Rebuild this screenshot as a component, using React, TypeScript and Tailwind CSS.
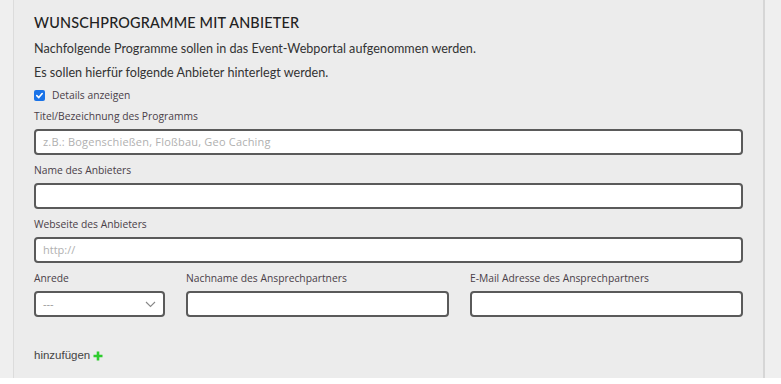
import React from "react";

const labelCls = "text-[10.3px] leading-[14px] text-[#4a4048] font-['Open_Sans',sans-serif]";
const inputCls = "h-[26px] rounded-[4px] border-2 border-[#5a5a5a] bg-white";

export default function App() {
  return (
    <div className="w-[781px] h-[384px] overflow-hidden bg-[#efefef] flex flex-col">
      <div className="flex h-[378px]">
        <div className="w-[13px] bg-[#efefef]" />
        <div className="w-[1px] bg-[#dcdcdc]" />
        <div className="w-[749px] bg-[#ececec] pl-[20px] pr-[20px] flex flex-col">
          <div className="mt-[14px] text-[14.4px] leading-[18px] tracking-[0.2px] text-[#222] font-['Lato',sans-serif] font-medium">
            WUNSCHPROGRAMME MIT ANBIETER
          </div>
          <div className="mt-[9px] text-[12.6px] leading-[16px] text-[#333] font-['Lato',sans-serif]">
            Nachfolgende Programme sollen in das Event-Webportal aufgenommen werden.
          </div>
          <div className="mt-[8px] text-[12.6px] leading-[16px] text-[#333] font-['Lato',sans-serif]">
            Es sollen hierfür folgende Anbieter hinterlegt werden.
          </div>
          <div className="mt-[7px] flex items-center h-[14px]">
            <div className="w-[11px] h-[11px] rounded-[2px] bg-[#1a73e8] flex items-center justify-center">
              <svg width="9" height="9" viewBox="0 0 10 10">
                <path d="M2 5.2 L4.2 7.3 L8 2.8" stroke="white" strokeWidth="1.8" fill="none" strokeLinecap="round" strokeLinejoin="round" />
              </svg>
            </div>
            <span className={labelCls + " ml-[7px]"}>Details anzeigen</span>
          </div>
          <div className={labelCls + " mt-[7px]"}>Titel/Bezeichnung des Programms</div>
          <div className={inputCls + " mt-[6px] w-[709px] flex items-center px-[7px]"}>
            <span className="text-[11px] text-[#b0b0b0] font-['Open_Sans',sans-serif] tracking-[0.2px]">
              z.B.: Bogenschießen, Floßbau, Geo Caching
            </span>
          </div>
          <div className={labelCls + " mt-[8px]"}>Name des Anbieters</div>
          <div className={inputCls + " mt-[6px] w-[709px]"} />
          <div className={labelCls + " mt-[8px]"}>Webseite des Anbieters</div>
          <div className={inputCls + " mt-[6px] w-[709px] flex items-center px-[7px]"}>
            <span className="text-[11px] text-[#b0b0b0] font-['Open_Sans',sans-serif]">http://</span>
          </div>
          <div className="mt-[8px] flex gap-[21px]">
            <div className="flex flex-col w-[131px]">
              <div className={labelCls}>Anrede</div>
              <div className={inputCls + " mt-[6px] flex items-center justify-between px-[7px]"}>
                <span className="text-[11px] text-[#999] font-['Open_Sans',sans-serif]">---</span>
                <svg width="11" height="7" viewBox="0 0 11 7">
                  <path d="M1 1 L5.5 5.5 L10 1" stroke="#888" strokeWidth="1.1" fill="none" />
                </svg>
              </div>
            </div>
            <div className="flex flex-col w-[263px]">
              <div className={labelCls}>Nachname des Ansprechpartners</div>
              <div className={inputCls + " mt-[6px]"} />
            </div>
            <div className="flex flex-col w-[273px]">
              <div className={labelCls}>E-Mail Adresse des Ansprechpartners</div>
              <div className={inputCls + " mt-[6px]"} />
            </div>
          </div>
          <div className="mt-[30px] flex items-center text-[11.5px] text-[#444] font-['Liberation_Sans',sans-serif]">
            hinzufügen
            <svg className="ml-[3px]" width="10" height="10" viewBox="0 0 10 10">
              <path d="M5 0.5 V9.5 M0.5 5 H9.5" stroke="#2ecc2e" strokeWidth="2.6" />
            </svg>
          </div>
        </div>
        <div className="w-[2px] bg-[#d6d6d6]" />
        <div className="flex-1 bg-[#efefef]" />
      </div>
      <div className="flex-1 bg-white" />
    </div>
  );
}
